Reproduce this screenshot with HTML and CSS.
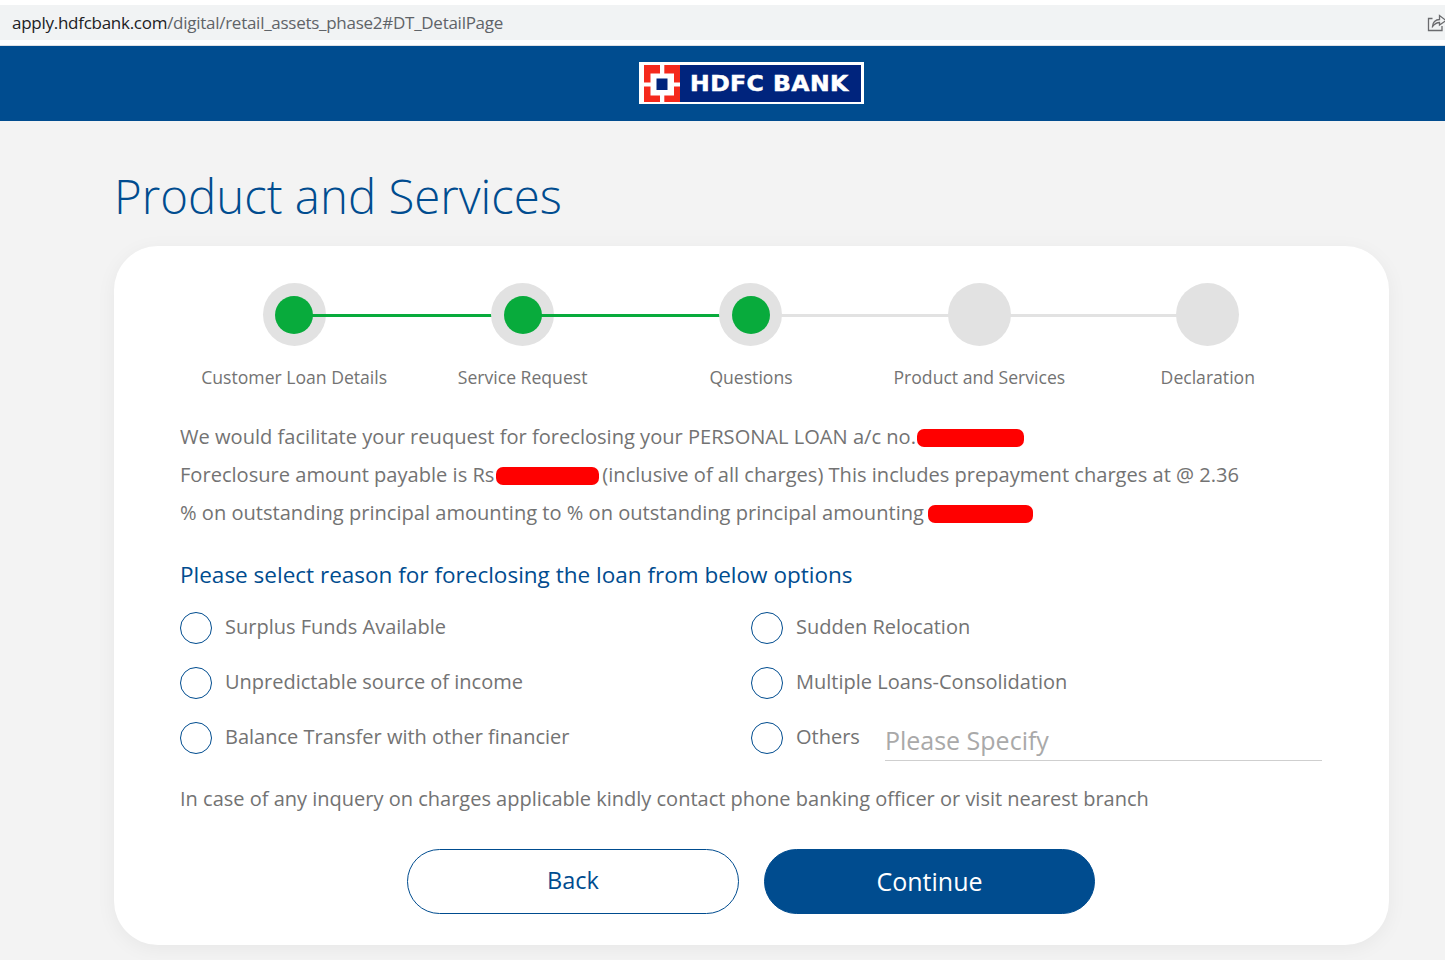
FILE: index.html
```html
<!DOCTYPE html>
<html lang="en">
<head>
<meta charset="utf-8">
<title>Product and Services</title>
<link rel="stylesheet" href="styles.css">
</head>
<body>
<div class="browser-bar">
  <div class="url"><span class="url-host">apply.hdfcbank.com</span>/digital/retail_assets_phase2#DT_DetailPage</div>
  <svg class="share" width="18" height="18" viewBox="0 0 18 18" fill="none" stroke="#6a6b6e" stroke-width="1.3">
    <path d="M5.500 4.500H1.500V16.500H15V12"/>
    <path d="M5.500 12.500C5.500 8.500 8.500 5.500 12.500 5.500V1.500L19 6.500L12.500 11V8.500C10 8.500 7.500 10 5.500 12.500Z"/>
  </svg>
</div>
<header class="brand-bar">
  <div class="logo">
    <svg class="logo-mark" width="36" height="37" viewBox="0 0 36 37">
      <rect width="36" height="37" fill="#f5291c"/>
      <rect x="16" y="0" width="4.300" height="37" fill="#fff"/>
      <rect x="0" y="17.500" width="36" height="4" fill="#fff"/>
      <rect x="6.500" y="8.500" width="23.500" height="22" fill="#fff"/>
      <rect x="12.500" y="13.500" width="11" height="11.500" fill="#00247d"/>
    </svg>
    <div class="logo-name"><span class="logo-text">HDFC BANK</span></div>
  </div>
</header>
<main class="page">
  <h1 class="title">Product and Services</h1>
  <section class="card">
    <ol class="stepper">
      <li class="step done"><span class="dot"></span><span class="step-label">Customer Loan Details</span></li>
      <li class="step done"><span class="dot"></span><span class="step-label">Service Request</span></li>
      <li class="step done"><span class="dot"></span><span class="step-label">Questions</span></li>
      <li class="step"><span class="dot"></span><span class="step-label">Product and Services</span></li>
      <li class="step"><span class="dot"></span><span class="step-label">Declaration</span></li>
    </ol>
    <div class="summary">
      <p>We would facilitate your reuquest for foreclosing your PERSONAL LOAN a/c no.<span class="redact r1"></span></p>
      <p>Foreclosure amount payable is Rs <span class="redact r2"></span> (inclusive of all charges) This includes prepayment charges at @ 2.36</p>
      <p>% on outstanding principal amounting to % on outstanding principal amounting <span class="redact r3"></span></p>
    </div>
    <h2 class="question">Please select reason for foreclosing the loan from below options</h2>
    <div class="options">
      <label class="option"><span class="radio"></span>Surplus Funds Available</label>
      <label class="option"><span class="radio"></span>Sudden Relocation</label>
      <label class="option"><span class="radio"></span>Unpredictable source of income</label>
      <label class="option"><span class="radio"></span>Multiple Loans-Consolidation</label>
      <label class="option"><span class="radio"></span>Balance Transfer with other financier</label>
      <div class="option"><span class="radio"></span>Others<span class="specify">Please Specify</span></div>
    </div>
    <p class="note">In case of any inquery on charges applicable kindly contact phone banking officer or visit nearest branch</p>
    <div class="actions">
      <button class="btn btn-back">Back</button>
      <button class="btn btn-next">Continue</button>
    </div>
  </section>
</main>
</body>
</html>
```
FILE: styles.css
```css
* { box-sizing: border-box; }
html, body { margin: 0; padding: 0; }
body {
  width: 1445px;
  height: 960px;
  overflow: hidden;
  background: #f3f3f3;
  font-family: "Open Sans", "Liberation Sans", sans-serif;
  color: #737373;
}
.browser-bar {
  height: 46px;
  padding: 5px 0;
  background: #fff;
  display: flex;
  border-bottom: 1px solid #dfe1e5;
}
.url {
  flex: 1;
  height: 35px;
  background: #f1f3f4;
  padding-left: 12px;
  display: flex;
  align-items: center;
  font-family: "Open Sans", sans-serif;
  font-size: 17px;
  letter-spacing: -0.27px;
  color: #5f6368;
  white-space: pre;
}
.url-host { color: #202124; }
.share { position: absolute; left: 1427px; top: 14px; overflow: hidden; }
.brand-bar {
  height: 75px;
  background: #004c8f;
  display: flex;
  align-items: center;
  justify-content: center;
  padding: 0 0 1px 58px;
}
.logo {
  width: 225px;
  height: 42px;
  background: #fff;
  padding: 3px 3px 2px 5px;
  display: flex;
}
.logo-mark { flex: none; }
.logo-name {
  flex: 1;
  background: #00247d;
  color: #fff;
  padding-left: 10px;
  overflow: hidden;
}
.logo-text {
  display: block;
  font-family: "DejaVu Sans", sans-serif;
  font-weight: 700;
  font-size: 21px;
  line-height: 39px;
  letter-spacing: 0.4px;
  white-space: nowrap;
  transform: scaleX(1.12);
  transform-origin: left center;
  -webkit-text-stroke: 0.5px #fff;
}
.page { padding: 0 56px 0 114px; }
.title {
  margin: 0;
  padding-top: 46px;
  height: 125px;
  font-weight: 300;
  font-size: 47.400px;
  line-height: 58px;
  color: #004c8f;
}
.card {
  width: 1275px;
  height: 699px;
  background: #fff;
  border-radius: 44px;
  box-shadow: 0 4px 20px rgba(0, 0, 0, 0.05);
  padding: 37px 67px 0 66px;
}
.stepper {
  list-style: none;
  margin: 0;
  padding: 0;
  display: grid;
  grid-template-columns: repeat(5, 1fr);
}
.step {
  position: relative;
  display: flex;
  flex-direction: column;
  align-items: center;
}
.step:not(:last-child)::after {
  content: "";
  position: absolute;
  left: 50%;
  width: 100%;
  top: 30.500px;
  height: 3px;
  background: #e2e2e2;
}
.step.done:not(:nth-child(3))::after { background: #08ab3c; }
.dot {
  width: 63px;
  height: 63px;
  border-radius: 50%;
  background: #e2e2e2;
  display: flex;
  align-items: center;
  justify-content: center;
}
.done .dot::before {
  content: "";
  position: relative;
  z-index: 1;
  width: 38px;
  height: 38px;
  border-radius: 50%;
  background: #08ab3c;
}
.step-label {
  margin-top: 19px;
  font-size: 17.600px;
  line-height: 24px;
  white-space: nowrap;
}
.summary { margin-top: 29px; font-size: 20.080px; line-height: 38px; }
.summary p { margin: 0; white-space: nowrap; }
.redact {
  display: inline-block;
  height: 18px;
  background: #ff0000;
  border-radius: 7px;
  vertical-align: -3px;
}
.r1 { width: 107px; margin-left: 1px; }
.r2 { width: 103px; margin: 0 -2px 0 -3.500px; }
.r3 { width: 105px; margin-left: -1px; }
.question {
  margin: 27px 0 0;
  font-weight: 400;
  font-size: 22.530px;
  line-height: 32px;
  color: #004c8f;
}
.options {
  margin-top: 19px;
  display: grid;
  grid-template-columns: 571px 1fr;
  grid-auto-rows: 55px;
}
.option {
  display: flex;
  align-items: center;
  font-size: 20px;
  height: 32px;
  white-space: nowrap;
}
.radio {
  flex: none;
  width: 32px;
  height: 32px;
  margin-top: 4px;
  margin-right: 13px;
  border: 1px solid #004c8f;
  border-radius: 50%;
}
.specify {
  flex: 1;
  margin-left: 25px;
  height: 38px;
  margin-top: 12px;
  font-size: 25px;
  line-height: 34px;
  color: #a9a9a9;
  border-bottom: 1px solid #cfcfcf;
}
.note { margin: 8px 0 0; font-size: 20px; line-height: 32px; white-space: nowrap; }
.actions {
  margin-top: 34px;
  display: flex;
  gap: 25px;
  padding-left: 227px;
}
.btn {
  width: 332px;
  height: 65px;
  border-radius: 33px;
  border: 1px solid #004c8f;
  font-family: inherit;
  font-size: 25px;
  padding: 0 0 2px;
}
.btn-back { background: #fff; color: #004c8f; font-size: 23.500px; font-weight: 500; padding-bottom: 4px; }
.btn-next { width: 331px; background: #004c8f; color: #fff; }
```
